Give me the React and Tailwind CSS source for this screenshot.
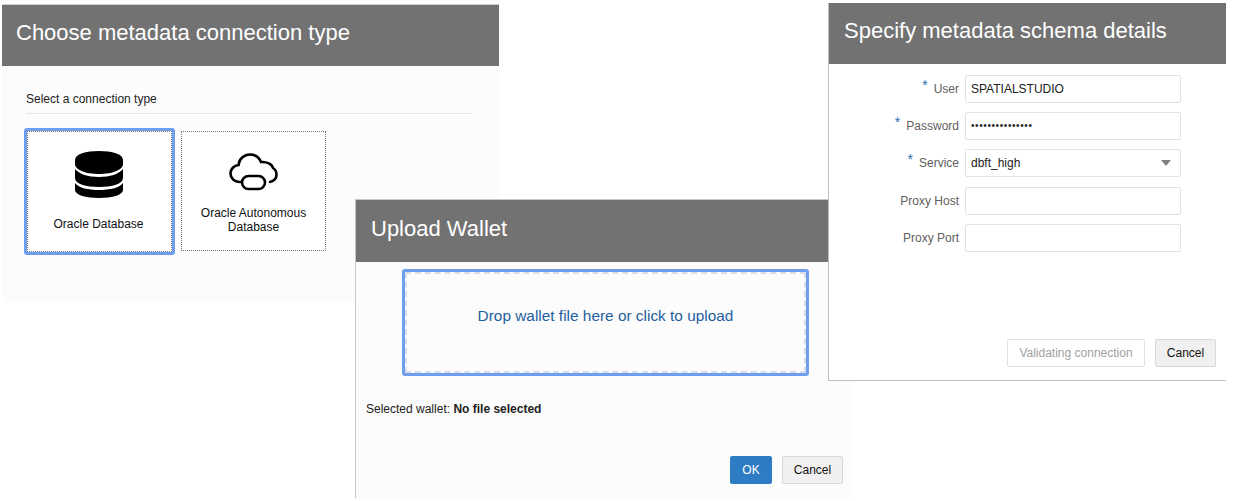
const FONT = "font-['Liberation_Sans',Arial,sans-serif]";

function Header({ title, pad, h }) {
  return (
    <div className={`bg-[#727272] flex items-center text-white text-[22px] leading-none ${pad} ${h}`}>
      <span className="-mt-[5px] whitespace-nowrap">{title}</span>
    </div>
  );
}

function Btn({ children, className }) {
  return (
    <div className={`h-[28px] flex items-center justify-center rounded-[2px] border text-[12px] ${className}`}>
      {children}
    </div>
  );
}

function DbIcon() {
  return (
    <svg width="50" height="49" viewBox="0 0 50 49">
      <path fill="#000" d="M1 10C1 4 12 1 25 1s24 3 24 9v4c0 6-11 10-24 10S1 20 1 14z" />
      <path fill="#000" d="M1 19c4 5 13 8 24 8s20-3 24-8v9c0 6-11 9-24 9S1 34 1 28z" />
      <path fill="#000" d="M1 33c4 5 13 7 24 7s20-2 24-7v7c0 5-11 8-24 8S1 45 1 40z" />
    </svg>
  );
}

function CloudIcon() {
  return (
    <svg width="49" height="38" viewBox="0 0 49 38" fill="none" stroke="#000" strokeWidth="2.6" strokeLinecap="round">
      <path d="M11 29C5 29 1.5 25 1.5 20.5C1.5 16 5 12.5 9.5 12C10 6 15 1.5 21 1.5C26 1.5 30 4 32 9C38 8.5 43 11 44 15C46.5 16.5 47.5 19 47.5 21.5C47.5 25 45 28 41 29" />
      <rect x="13" y="23" width="23" height="13" rx="6.5" />
    </svg>
  );
}

function Field({ label, req, children }) {
  return (
    <div className="flex items-stretch h-[28px] mb-[9.2px]">
      <div className="w-[130px] flex justify-end items-center text-[12px] text-[#606060] whitespace-nowrap">
        {req && <span className="text-[#2b6cb0] text-[14px] leading-none mr-[6px] -mt-2">*</span>}
        <span>{label}</span>
      </div>
      <div className="w-[216px] ml-[6px] border border-[#e2e2e2] rounded-[2px] bg-white flex items-center justify-between pl-[5px] pr-[9px] text-[12px] text-[#222]">
        {children}
      </div>
    </div>
  );
}

export default function App() {
  return (
    <div className={`relative w-[1243px] h-[501px] bg-white overflow-hidden ${FONT}`}>
      {/* Choose connection type */}
      <div className="absolute left-[2px] top-[4px] w-[497px] h-[298px] bg-[#fcfcfc] flex flex-col border-t border-[#d0d0d0]">
        <Header title="Choose metadata connection type" pad="pl-[14px]" h="h-[61px]" />
        <div className="pl-[24px] pr-[26px] pt-[25px]">
          <div className="text-[12px] text-[#222] leading-[16px] pb-[6px] border-b border-[#e6e6e6]">Select a connection type</div>
          <div className="flex items-center mt-[14px] -ml-[2px]">
            <div className="w-[151px] h-[127px] border-[3px] border-[#6f9eef] rounded-[3px] bg-white">
              <div className="h-full border border-dotted border-[#777] flex flex-col items-center pt-[18px] pr-[2px]">
                <DbIcon />
                <div className="text-[12px] text-[#111] mt-[16px]">Oracle Database</div>
              </div>
            </div>
            <div className="w-[145px] h-[120px] ml-[6px] -mt-[1px] border border-dotted border-[#777] bg-white flex flex-col items-center pt-[21px]">
              <CloudIcon />
              <div className="text-[12px] leading-[14px] text-[#111] text-center mt-[15px]">Oracle Autonomous<br />Database</div>
            </div>
          </div>
        </div>
      </div>

      {/* Upload wallet */}
      <div className="absolute left-[355px] top-[199px] w-[498px] h-[299px] bg-[#fcfcfc] flex flex-col border-l border-t border-[#c8c8c8]">
        <Header title="Upload Wallet" pad="pl-[15px]" h="h-[62px]" />
        <div className="ml-[46px] mt-[7px] w-[407px] h-[107px] border-[3px] border-[#6f9eef] rounded-[3px]">
          <div className="h-full border-2 border-dashed border-[#d8dde6] flex items-center justify-center text-[15.4px] text-[#1f5f9e] pb-[14px]">
            Drop wallet file here or click to upload
          </div>
        </div>
        <div className="ml-[10px] mt-[25px] text-[12px] text-[#222] leading-[16px]">
          Selected wallet: <span className="font-bold">No file selected</span>
        </div>
        <div className="flex justify-end gap-[10px] mr-[10px] mt-[39px]">
          <Btn className="w-[42px] bg-[#2d7cc4] border-[#2d7cc4] text-white">OK</Btn>
          <Btn className="w-[61px] bg-[#f0f0f0] border-[#d8d8d8] text-[#111]">Cancel</Btn>
        </div>
      </div>

      {/* Schema details */}
      <div className="absolute left-[828px] top-[3px] w-[398px] h-[378px] bg-white flex flex-col border-l border-b border-[#c0c0c0]">
        <Header title="Specify metadata schema details" pad="pl-[15px]" h="h-[61px]" />
        <div className="pt-[11px]">
          <Field label="User" req>SPATIALSTUDIO</Field>
          <Field label="Password" req><span className="text-[10px] tracking-[0.6px] leading-none">•••••••••••••••</span></Field>
          <Field label="Service" req>
            <span>dbft_high</span>
            <span className="w-0 h-0 border-l-[5px] border-r-[5px] border-t-[6px] border-l-transparent border-r-transparent border-t-[#808080]" />
          </Field>
          <Field label="Proxy Host" />
          <Field label="Proxy Port" />
        </div>
        <div className="flex justify-end gap-[10px] mr-[10px] mt-auto mb-[13px]">
          <Btn className="w-[138px] bg-white border-[#e2e2e2] text-[#a0a0a0]">Validating connection</Btn>
          <Btn className="w-[61px] bg-[#f0f0f0] border-[#d8d8d8] text-[#111]">Cancel</Btn>
        </div>
      </div>
    </div>
  );
}
